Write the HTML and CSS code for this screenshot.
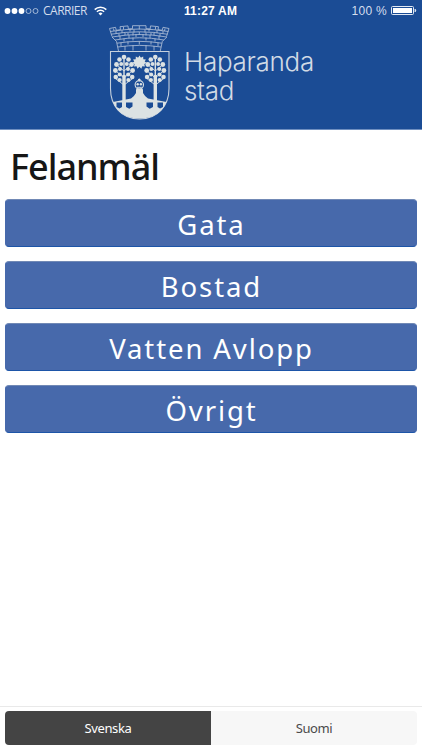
FILE: index.html
```html
<!DOCTYPE html>
<html lang="sv">
<head>
    <meta charset="UTF-8">
    <meta name="viewport" content="width=device-width, initial-scale=1">
    <title>Haparanda stad - Felanmäl</title>
    <link rel="stylesheet" href="styles.css">
</head>
<body>
    <header class="header">
        <div class="status-bar">
            <div class="status-left">
                <svg class="signal" width="36" height="8" viewBox="0 0 36 8">
                    <g fill="#fff">
                        <circle cx="3.500" cy="4" r="2.900"/>
                        <circle cx="10.500" cy="4" r="2.900"/>
                        <circle cx="17.500" cy="4" r="2.900"/>
                    </g>
                    <g fill="none" stroke="#c3d0e5" stroke-width=".8">
                        <circle cx="24.500" cy="4" r="2.500"/>
                        <circle cx="31.500" cy="4" r="2.500"/>
                    </g>
                </svg>
                <span class="carrier">CARRIER</span>
                <svg class="wifi" width="13" height="10" viewBox="0 0 13 10">
                    <g fill="none" stroke="#fff" stroke-width="1.500">
                        <path d="M.7 3.600a8.200 8.200 0 0 1 11.600 0"/>
                        <path d="M2.900 5.800a5.100 5.100 0 0 1 7.200 0"/>
                    </g>
                    <path d="M4.500 7.500a2.900 2.900 0 0 1 4 0l-2 2z" fill="#fff"/>
                </svg>
            </div>
            <span class="clock">11:27 AM</span>
            <div class="status-right">
                <span class="percent">100 %</span>
                <svg class="battery" width="26" height="9" viewBox="0 0 26 9">
                    <rect x=".5" y=".5" width="22" height="8" rx="1" fill="none" stroke="#e2e9f3"/>
                    <rect x="2" y="2" width="19" height="5" fill="#fff"/>
                    <path d="M24 3q1.600 1.500 0 3z" fill="#fff" stroke="#fff" stroke-width=".6"/>
                </svg>
            </div>
        </div>

        <div class="logo">
            <svg class="crest" width="64" height="98" viewBox="107 24 64 98">
                <defs>
                    <!-- ett träd, stammen ligger på x = 0 -->
                    <g id="tree">
                        <path d="M0 85l-8-6M0 85l8-6M0 78l-8-7M0 78l8-7M0 71l-7-6M0 71l7-6" fill="none" stroke="#dce2e3" stroke-width=".9"/>
                        <rect x="-.7" y="56" width="1.400" height="20"/>
                        <rect x="-1.700" y="75" width="3.400" height="33"/>
                        <circle cx="0" cy="57" r="2.300"/>
                        <circle cx="-4.500" cy="59.500" r="2.300"/>
                        <circle cx="4.500" cy="59.500" r="2.300"/>
                        <circle cx="-2.800" cy="64" r="2"/>
                        <circle cx="2.800" cy="64" r="2"/>
                        <circle cx="-7.500" cy="64.500" r="2.400"/>
                        <circle cx="7.500" cy="64.500" r="2.400"/>
                        <circle cx="-4" cy="69" r="2"/>
                        <circle cx="4" cy="69" r="2"/>
                        <circle cx="-8.600" cy="70.500" r="2.400"/>
                        <circle cx="8.600" cy="70.500" r="2.400"/>
                        <circle cx="-4.200" cy="74.500" r="2.100"/>
                        <circle cx="4.200" cy="74.500" r="2.100"/>
                        <circle cx="-8.200" cy="77" r="2.300"/>
                        <circle cx="8.200" cy="77" r="2.300"/>
                        <circle cx="-4.400" cy="80" r="2.100"/>
                        <circle cx="4.400" cy="80" r="2.100"/>
                    </g>
                </defs>

                <!-- murkrona -->
                <g fill="none" stroke="#adbdd6" stroke-width=".85">
                    <path d="M112 36.500l-2.500-8 6-1.200.8 3 4.200-.6-.5-3 8-.8.300 3 4.200-.2V25.700h13.500v3l4.200.2.300-3 8 .8-.5 3 4.200.6.800-3 6 1.200-2.500 8"/>
                    <path d="M110.300 31.500q29-5 58 0M111.300 34.200q28-4.800 56 0M112 37q27.300-5 54.800 0"/>
                    <path d="M112 37l4.500 4.500 2 9.500M166.800 37l-4.500 4.500-2 9.500"/>
                    <path d="M115 40q24.300-4.500 48.800 0M117 43.200q22.300-3.700 44.800 0M117.700 47q21.600-3.200 43.400 0"/>
                    <path d="M113.500 28.500l.5 2.500M123.500 27v2.500M130 29v2.500M139.300 26v3.500M149 29v2.500M155.500 27v2.500M165 28.500l-.5 2.500"/>
                    <path d="M116 31v2.500M122 30v3M128 33v2M134 29.500v3M145 29.500v3M151 33v2M157 30v3M163 31v2.500"/>
                    <path d="M119 33.500v3M125 32.500v3M133 32.500v3M139.300 32v3M146 32.500v3M154 32.500v3M160 33.500v3"/>
                    <path d="M120 36v3M129 35v3M136 34v3M143 34v3M150 35v3M159 36v3M124 38.500v3M133 37.500v3M146 37.500v3M155 38.500v3"/>
                    <path d="M121 42.500v3.500M128 41.500v3M139.300 41v3.500M151 41.500v3M158 42.500v3.500M125 46v4.500M133 45v5.500M146 45v5.500M154 46v4.500"/>
                </g>

                <!-- sköld -->
                <path d="M110.500 51.500h58.500v37c0 17-11 30.500-29.500 30.500s-29-13.500-29-30.500z" fill="#1b4c95" stroke="#c7d1dd" stroke-width="1.100"/>
                <g fill="#dce2e3">
                    <path d="M113 102q9-2 18-3.500 3.500-2.500 5-5.500v-3.500l1-1h5l1 1V93q1.500 3 5 5.500 9 1.500 18.500 3.500-7 16.500-27 16.500T113 102z"/>
                    <use href="#tree" x="124"/>
                    <use href="#tree" x="155.300"/>
                    <circle cx="139.500" cy="61" r="3.500"/>
                    <path d="M139.500 55.600l1.300 2.200 2.400-1.200.1 2.600 2.600.3-1.200 2 2 1.600-2.400 1 .6 2.500-2.600-.3-1 2.400-1.900-1.900-1.900 1.900-.9-2.400-2.600.3.600-2.500-2.400-1 2.100-1.600-1.300-2 2.700-.3.100-2.600 2.400 1.200z"/>
                </g>
                <g fill="#1b4c95">
                    <path d="M116.500 102.500h5.500v4.500l-2.500 1.500-3-1.500zM126 102.500h6.500v4l-3.200 2.300L126 107zM146.500 102.500h6.500v4.500l-3.300 1.800-3.200-2.300zM157.500 102.500h5.500v4.500l-3 1.500-2.500-1.500z"/>
                </g>
                <circle cx="139.300" cy="84.800" r="4.200" fill="none" stroke="#dce2e3" stroke-width="1.100"/>
                <circle cx="137.700" cy="84.300" r="1.200" fill="#dce2e3"/>
                <circle cx="140.900" cy="84.300" r="1.200" fill="#dce2e3"/>
                <path d="M139.300 78.500v3M138.100 79.500h2.400M136.800 87.300h5" stroke="#dce2e3" stroke-width="1"/>
            </svg>
            <div class="logo-text">Haparanda<br>stad</div>
        </div>
    </header>

    <main class="content">
        <h1 class="title">Felanmäl</h1>
        <div class="menu">
            <button class="menu-button">Gata</button>
            <button class="menu-button">Bostad</button>
            <button class="menu-button">Vatten Avlopp</button>
            <button class="menu-button">Övrigt</button>
        </div>
    </main>

    <footer class="footer">
        <button class="lang active">Svenska</button>
        <button class="lang">Suomi</button>
    </footer>
</body>
</html>
```

FILE: styles.css
```css
* {
    box-sizing: border-box;
}

body {
    margin: 0;
    height: 750px;
    display: flex;
    flex-direction: column;
    background-color: #fff;
    font-family: "Noto Sans", sans-serif;
    overflow: hidden;
}

button {
    border: 0;
    padding: 0;
    font-family: inherit;
}

.header {
    height: 130px;
    background-color: #1b4c95;
    border-bottom: 1px solid #6f8fc0;
}

/* statusrad */
.status-bar {
    height: 20px;
    padding: 0 5px 0 4px;
    display: grid;
    grid-template-columns: 1fr auto 1fr;
    align-items: center;
    color: #fff;
    font-family: "Liberation Sans", sans-serif;
    font-size: 12px;
    line-height: 20px;
}

.status-left,
.status-right {
    display: flex;
    align-items: center;
}

.status-right {
    justify-content: flex-end;
}

.carrier {
    margin: 1px 0 0 3px;
    font-family: "Open Sans", sans-serif;
    font-size: 12px;
    letter-spacing: -0.5px;
    color: #d3ddec;
}

.wifi {
    margin-left: 7px;
}

.clock {
    font-weight: bold;
    letter-spacing: 0.2px;
}

.percent {
    margin-right: 4px;
    color: #d5deed;
    letter-spacing: 0.3px;
}

/* logotyp */
.logo {
    display: flex;
    padding: 4px 0 0 107px;
}

.logo-text {
    margin: 23px 0 0 13px;
    font-family: Inter, "Liberation Sans", sans-serif;
    font-size: 26px;
    font-weight: 300;
    line-height: 29px;
    letter-spacing: -0.3px;
    color: #d2dbe5;
}

.content {
    flex: 1;
    padding: 12px 5px 0;
}

.title {
    margin: 0 0 7px 5px;
    font-size: 36px;
    font-weight: 500;
    line-height: 50px;
    letter-spacing: -1px;
    color: #161616;
}

.menu {
    display: flex;
    flex-direction: column;
    gap: 14px;
}

.menu-button {
    height: 48px;
    padding: 3px 0 0 1px;
    border: 1px solid #4769ab;
    border-top-color: #7189b5;
    border-bottom-color: #1d55a8;
    border-radius: 4px;
    background-color: #4769ab;
    color: #fff;
    font-size: 27.5px;
    line-height: 40px;
    letter-spacing: 1.9px;
}

/* språkval */
.footer {
    height: 44px;
    padding: 4px 5px 5px;
    display: flex;
    border-top: 1px solid #e9e9e9;
}

.lang {
    flex: 1;
    background-color: #f7f7f7;
    border-radius: 0 4px 4px 0;
    color: #4a4a4a;
    font-size: 13px;
    letter-spacing: -0.4px;
}

.lang.active {
    background-color: #444;
    border-radius: 4px 0 0 4px;
    color: #fff;
}
```
